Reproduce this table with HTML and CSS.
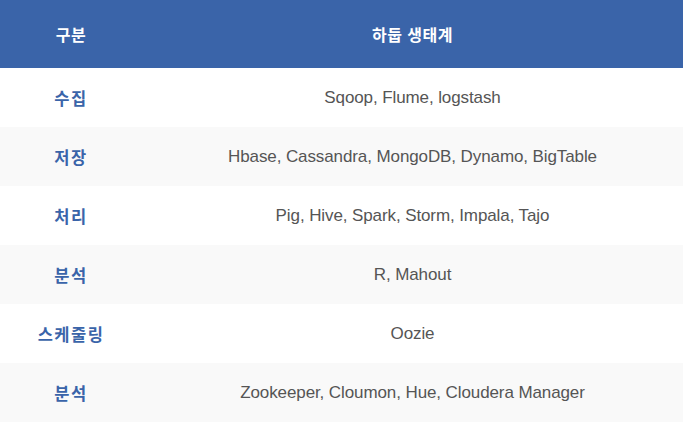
FILE: index.html
```html
<!DOCTYPE html>
<html lang="ko">
<head>
<meta charset="utf-8">
<link rel="stylesheet" href="styles.css">
</head>
<body>
<table class="eco">
  <thead>
    <tr><th class="c1">구분</th><th class="c2">하둡 생태계</th></tr>
  </thead>
  <tbody>
    <tr><td class="k">수집</td><td class="v">Sqoop, Flume, logstash</td></tr>
    <tr><td class="k">저장</td><td class="v">Hbase, Cassandra, MongoDB, Dynamo, BigTable</td></tr>
    <tr><td class="k">처리</td><td class="v">Pig, Hive, Spark, Storm, Impala, Tajo</td></tr>
    <tr><td class="k">분석</td><td class="v">R, Mahout</td></tr>
    <tr><td class="k">스케줄링</td><td class="v">Oozie</td></tr>
    <tr><td class="k">분석</td><td class="v">Zookeeper, Cloumon, Hue, Cloudera Manager</td></tr>
  </tbody>
</table>
</body>
</html>
```
FILE: styles.css
```css
html, body { margin: 0; padding: 0; background: #fff; }
.eco {
  width: 683px;
  border-collapse: collapse;
  font-family: "Liberation Sans", "Noto Sans CJK KR", sans-serif;
}
.eco th {
  height: 68px;
  padding: 0;
  background: #3a64a9;
  color: #fff;
  font-family: "Noto Sans CJK KR", sans-serif;
  font-weight: 700;
  font-size: 16px;
  letter-spacing: 0.5px;
  text-align: center;
}
.c1 { width: 142px; }
.eco td {
  height: 59px;
  padding: 0;
  text-align: center;
}
.eco tbody tr:nth-child(even) td { background: #f9f9f9; }
.k {
  color: #3a64a9;
  font-family: "Noto Sans CJK KR", sans-serif;
  font-weight: 700;
  font-size: 16.5px;
  letter-spacing: 1.5px;
}
.v {
  color: #555;
  font-size: 17px;
  letter-spacing: -0.1px;
}
```
